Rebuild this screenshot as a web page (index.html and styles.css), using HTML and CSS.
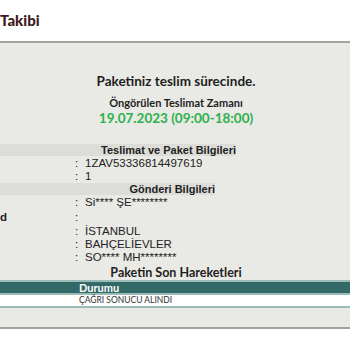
FILE: index.html
```html
<!DOCTYPE html>
<html lang="tr">
<head>
<meta charset="utf-8">
<link rel="stylesheet" href="styles.css">
</head>
<body>
<header class="top">
  <h1 class="title">Takibi</h1>
</header>
<main class="panel">
  <div class="status">
    <p class="status-main">Paketiniz teslim sürecinde.</p>
    <p class="status-sub">Öngörülen Teslimat Zamanı</p>
    <p class="status-date">19.07.2023 (09:00-18:00)</p>
  </div>
  <div class="info">
    <div class="band band-1">Teslimat ve Paket Bilgileri</div>
    <div class="row"><span class="label"></span><span class="colon">:</span><span class="value">1ZAV53336814497619</span></div>
    <div class="row"><span class="label"></span><span class="colon">:</span><span class="value">1</span></div>
    <div class="band band-2">Gönderi Bilgileri</div>
    <div class="row"><span class="label"></span><span class="colon">:</span><span class="value">Si**** ŞE********</span></div>
    <div class="row row-tall"><span class="label">d</span><span class="colon">:</span><span class="value"></span></div>
    <div class="row"><span class="label"></span><span class="colon">:</span><span class="value">İSTANBUL</span></div>
    <div class="row"><span class="label"></span><span class="colon">:</span><span class="value">BAHÇELİEVLER</span></div>
    <div class="row"><span class="label"></span><span class="colon">:</span><span class="value">SO**** MH********</span></div>
  </div>
  <h2 class="moves-title">Paketin Son Hareketleri</h2>
  <div class="moves">
    <div class="moves-head"><span class="cell">Durumu</span></div>
    <div class="moves-row"><span class="cell">ÇAĞRI SONUCU ALINDI</span></div>
  </div>
</main>
</body>
</html>
```
FILE: styles.css
```css
html, body {
  margin: 0;
  padding: 0;
  background: #ffffff;
}
body {
  width: 350px;
  height: 350px;
  overflow: hidden;
  font-family: "Lato", "Open Sans", sans-serif;
}
.top {
  height: 41px;
  background: #ffffff;
  border-bottom: 2px solid #a3a39f;
  display: flex;
  align-items: flex-start;
}
.title {
  margin: 11px 0 0 0;
  font-size: 15px;
  font-weight: 900;
  color: #3d1a1c;
  line-height: 18px;
}
.panel {
  background: #e9e9e5;
  height: 286px;
  border-bottom: 2px solid #a3a39f;
  padding-top: 29px;
  box-sizing: border-box;
}
.status {
  text-align: center;
  padding-left: 2px;
}
.status p { margin: 0; }
.status-main {
  font-size: 13.5px;
  font-weight: 700;
  color: #1e1e1e;
  line-height: 18px;
}
.status-sub {
  margin-top: 6px !important;
  font-size: 11px;
  font-weight: 700;
  color: #1e1e1e;
  line-height: 13px;
}
.status-date {
  margin-top: 1px !important;
  font-size: 13.5px;
  font-weight: 700;
  color: #2db14e;
  line-height: 16px;
}
.info {
  margin-top: 18px;
  font-family: "Liberation Sans", Arial, sans-serif;
  font-size: 11.5px;
  color: #222;
}
.band {
  background: #dcdcd8;
  font-weight: 700;
  font-size: 11px;
  text-align: right;
  height: 12px;
  line-height: 12px;
  margin: 0 0 1px;
}
.band-1 { width: 236px; }
.band-2 { width: 215px; }
.row {
  display: flex;
  height: 13px;
  line-height: 13px;
}
.row-tall {
  height: 16px;
  line-height: 16px;
}
.label {
  width: 75px;
  font-weight: 700;
}
.colon {
  width: 10px;
}
.value {
  white-space: nowrap;
}
.moves-title {
  margin: 2px 0 0 0;
  text-align: center;
  font-size: 12.5px;
  font-weight: 700;
  color: #1e1e1e;
  line-height: 14px;
  padding-left: 2px;
}
.moves {
  margin-top: 0;
}
.moves-head {
  background: #336966;
  border-top: 2px solid #9bbcb6;
  border-bottom: 2px solid #9bbcb6;
  height: 11px;
  color: #ffffff;
  font-size: 11px;
  font-weight: 700;
  line-height: 12px;
}
.moves-row {
  background: #ffffff;
  border-bottom: 2px solid #9bbcb6;
  height: 11px;
  font-size: 8.5px;
  line-height: 11px;
  color: #333;
}
.cell {
  display: block;
  padding-left: 79px;
}
```
